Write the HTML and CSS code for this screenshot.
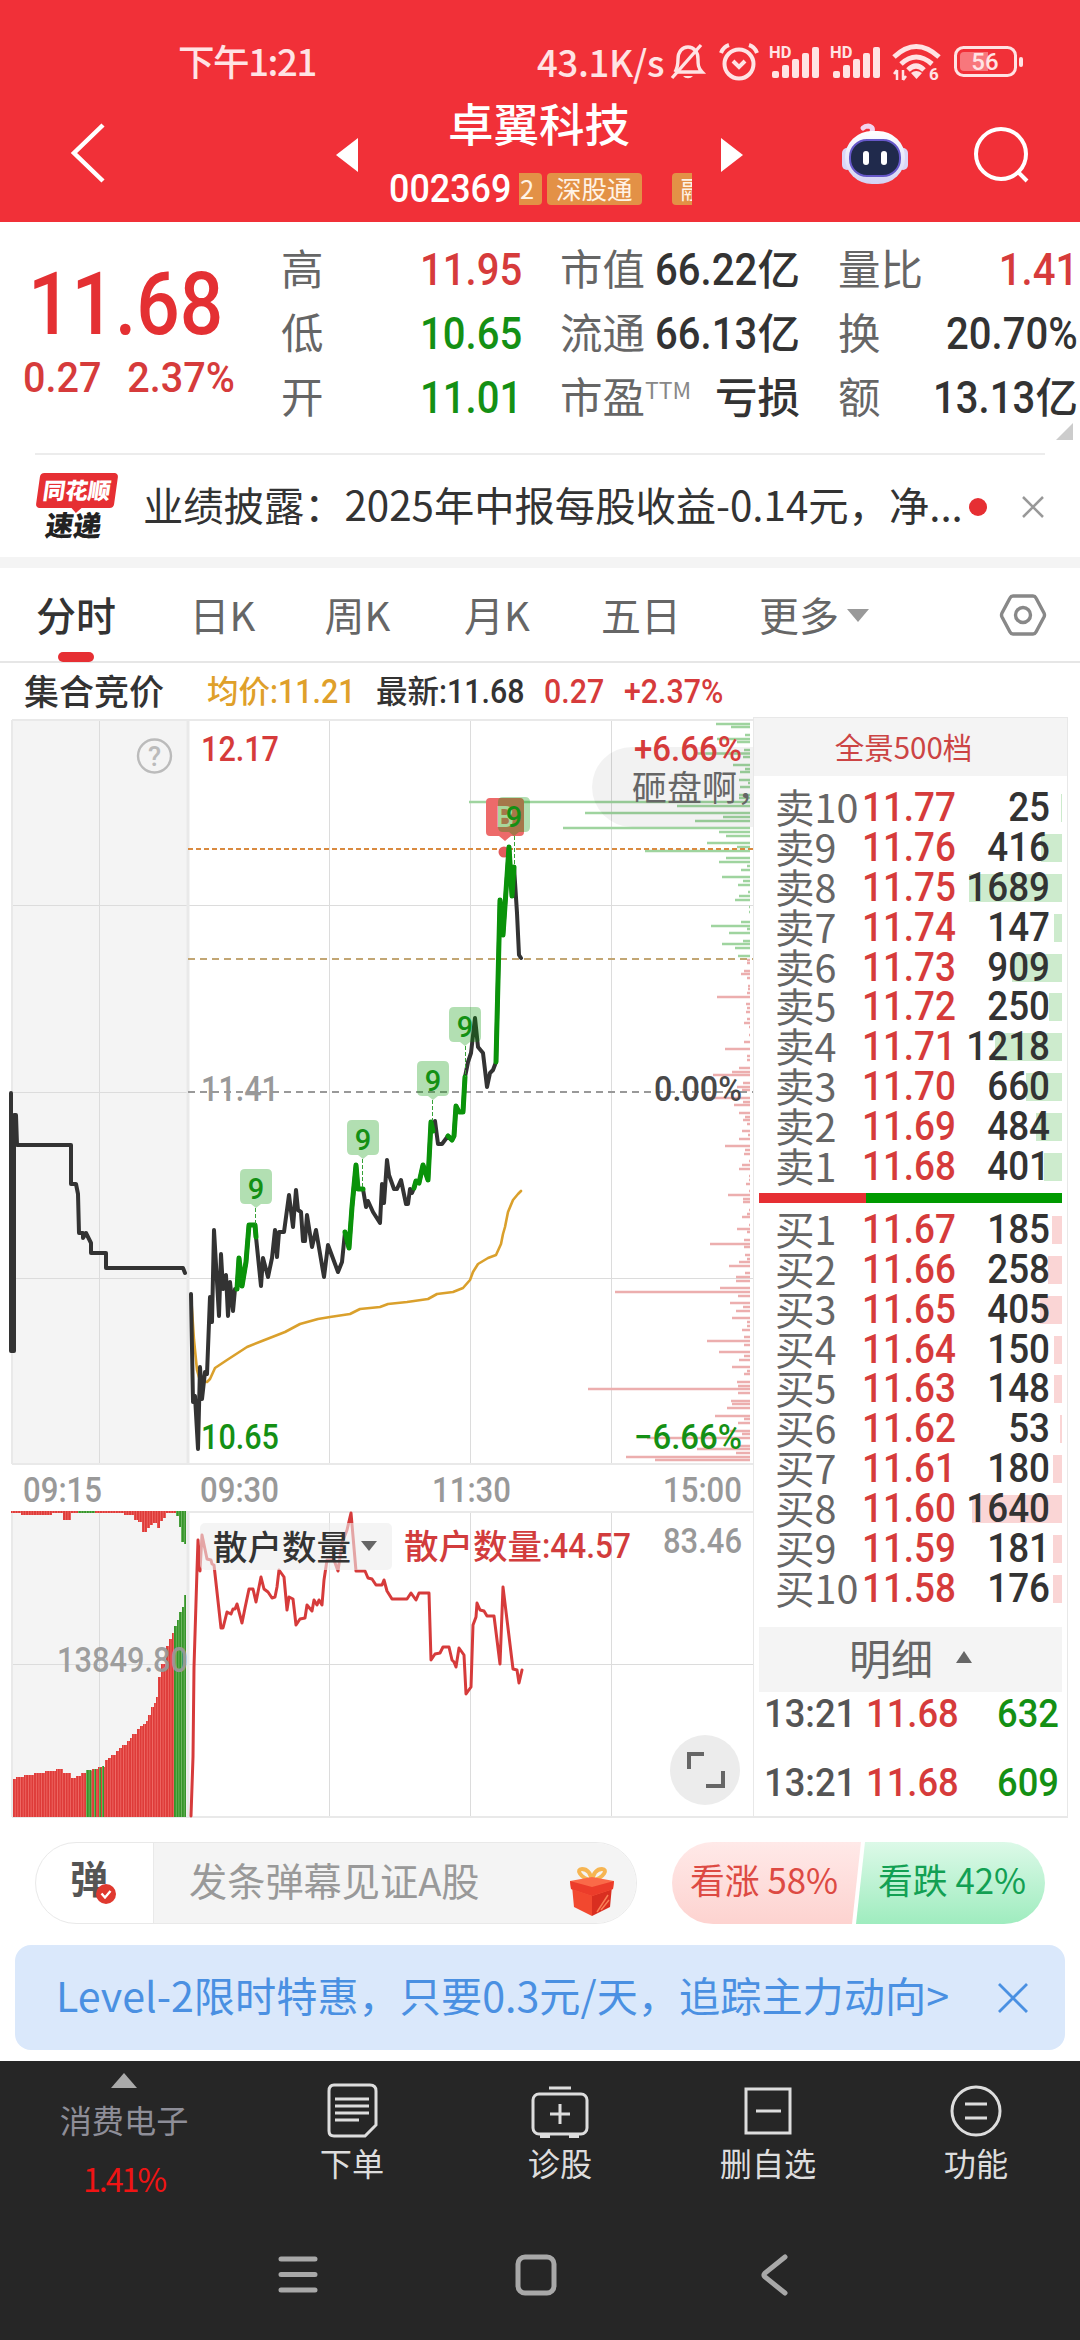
FILE: index.html
```html
<!DOCTYPE html>
<html lang="zh-CN">
<head>
    <meta charset="UTF-8">
    <meta name="viewport" content="width=device-width, initial-scale=1.0">
    <title>卓翼科技 002369</title>
    <link rel="stylesheet" href="styles.css">
</head>
<body>

    <header class="header">
        <div class="status-bar">
            <span class="clock">下午1:21</span>
            <div class="status-icons">
                <span class="speed">43.1K/s</span>
                <svg class="bell" width="36" height="38" viewBox="0 0 36 38" fill="none" stroke="#ffe3e4" stroke-width="3.400">
                    <path d="M7 29H32C28 25 28 21 28 16C28 9 24 4 18 4C12 4 8 9 8 16C8 21 8 24 5 29"/>
                    <path d="M2 35L31 2"/>
                    <path d="M13 33A6 5 0 0 0 23 33Z" fill="#ffe3e4" stroke="none"/>
                </svg>
                <svg class="alarm" width="40" height="38" viewBox="0 0 40 38" fill="none" stroke="#ffe3e4" stroke-width="4">
                    <circle cx="20" cy="21" r="14.5"/>
                    <path d="M2 10Q4 4 10 2M38 10Q36 4 30 2M14 18L20 24L26 18"/>
                </svg>
                <svg class="signal" width="51" height="36" viewBox="0 0 51 36">
                    <text class="hd" x="0" y="14">HD</text>
                    <g fill="#ffe3e4"><rect x="3" y="27" width="7" height="7" rx="2"/><rect x="13" y="21" width="7" height="13" rx="2"/><rect x="23" y="15" width="7" height="19" rx="2"/><rect x="33" y="9" width="7" height="25" rx="2"/><rect x="43" y="3" width="7" height="31" rx="2"/></g>
                </svg>
                <svg class="signal" width="51" height="36" viewBox="0 0 51 36">
                    <text class="hd" x="0" y="14">HD</text>
                    <g fill="#ffe3e4"><rect x="3" y="27" width="7" height="7" rx="2"/><rect x="13" y="21" width="7" height="13" rx="2"/><rect x="23" y="15" width="7" height="19" rx="2"/><rect x="33" y="9" width="7" height="25" rx="2"/><rect x="43" y="3" width="7" height="31" rx="2"/></g>
                </svg>
                <svg class="wifi" width="48" height="38" viewBox="0 0 48 38" fill="none" stroke="#ffe3e4" stroke-width="5">
                    <path d="M1 14Q23 -7 46 14M8 21Q23 7 39 21M15 27Q23 19 31 27"/>
                    <path d="M18 30L23.500 36L29 30Q23 26 18 30Z" fill="#ffe3e4" stroke="none"/>
                    <path d="M4 27V37M4 27L1 31M10 27V37M10 37L13 33" stroke-width="2.500"/>
                    <text class="wifi-gen" x="36" y="37">6</text>
                </svg>
                <svg class="battery" width="70" height="32" viewBox="0 0 70 32">
                    <rect x="1.500" y="1.500" width="60" height="28" rx="8" fill="none" stroke="#ffe3e4" stroke-width="3"/>
                    <path d="M10 6H34V25H10Q6 25 6 21V10Q6 6 10 6Z" fill="#f8777c"/>
                    <rect x="65" y="11" width="4" height="10" rx="2" fill="#ffe3e4"/>
                    <text class="battery-text" x="31" y="23.500" text-anchor="middle">56</text>
                </svg>
            </div>
        </div>
        <div class="title-bar">
            <svg class="back" width="36" height="60" viewBox="0 0 36 60" fill="none" stroke="#fff" stroke-width="4.500"><path d="M33 2L4 30L33 58"/></svg>
            <svg class="prev" width="22" height="34" viewBox="0 0 22 34"><path d="M22 0V34L0 17Z" fill="#fff"/></svg>
            <div class="stock">
                <h1>卓翼科技</h1>
                <div class="stock-code">
                    <span class="code">002369</span>
                    <span class="tag tag-cut-left">2</span>
                    <span class="tag">深股通</span>
                    <span class="tag tag-cut-right">融</span>
                </div>
            </div>
            <svg class="next" width="22" height="34" viewBox="0 0 22 34"><path d="M0 0V34L22 17Z" fill="#fff"/></svg>
            <svg class="robot" width="68" height="64" viewBox="0 0 68 64">
                <defs>
                    <linearGradient id="shell" x1="0" y1="0" x2="0" y2="1"><stop offset="0" stop-color="#fff"/><stop offset="1" stop-color="#d3d2f5"/></linearGradient>
                </defs>
                <path d="M30 12Q34 5 27 4Q24 4 22 6" fill="none" stroke="#f3d3ee" stroke-width="5" stroke-linecap="round"/>
                <rect x="1" y="26" width="10" height="22" rx="5" fill="#d9d6f7"/>
                <rect x="57" y="26" width="10" height="22" rx="5" fill="#d9d6f7"/>
                <rect x="4" y="9" width="60" height="53" rx="27" fill="url(#shell)"/>
                <rect x="9" y="18" width="50" height="36" rx="17" fill="#202a4c" stroke="#6658c9" stroke-width="2"/>
                <rect x="22" y="29" width="6" height="14" rx="3" fill="#fff"/>
                <rect x="40" y="29" width="6" height="14" rx="3" fill="#fff"/>
            </svg>
            <svg class="search" width="58" height="58" viewBox="0 0 58 58" fill="none" stroke="#fff" stroke-width="4"><circle cx="28" cy="29" r="25"/><path d="M44 46L54 56"/></svg>
        </div>
    </header>

    <section class="quote">
        <div class="price">
            <div class="last">11.68</div>
            <div class="change"><span>0.27</span><span>2.37%</span></div>
        </div>
        <dl class="metrics">
            <div><dt>高</dt><dd class="up"><span>11.95</span></dd></div>
            <div><dt>低</dt><dd class="down"><span>10.65</span></dd></div>
            <div><dt>开</dt><dd class="down"><span>11.01</span></dd></div>
        </dl>
        <dl class="metrics">
            <div><dt>市值</dt><dd><span>66.22</span><b>亿</b></dd></div>
            <div><dt>流通</dt><dd><span>66.13</span><b>亿</b></dd></div>
            <div><dt>市盈<sup>TTM</sup></dt><dd><b>亏损</b></dd></div>
        </dl>
        <dl class="metrics">
            <div><dt>量比</dt><dd class="up"><span>1.41</span></dd></div>
            <div><dt>换</dt><dd><span>20.70%</span></dd></div>
            <div><dt>额</dt><dd><span>13.13</span><b>亿</b></dd></div>
        </dl>
        <span class="corner"></span>
    </section>

    <section class="news">
        <div class="news-logo">
            <span class="logo-top">同花顺</span>
            <span class="logo-bottom">速递</span>
        </div>
        <p>业绩披露：2025年中报每股收益-0.14元，净...</p>
        <span class="dot"></span>
        <svg width="24" height="24" viewBox="0 0 24 24" fill="none" stroke="#999" stroke-width="2.500"><path d="M2 2L22 22M22 2L2 22"/></svg>
    </section>

    <nav class="tabs">
        <a class="tab active">分时</a>
        <a class="tab">日K</a>
        <a class="tab">周K</a>
        <a class="tab">月K</a>
        <a class="tab">五日</a>
        <a class="tab more">更多<i></i></a>
        <svg class="settings" width="46" height="42" viewBox="0 0 46 42" fill="none" stroke="#888" stroke-width="3.400"><path d="M13 2H33Q35 2 36 4L44 19Q45 21 44 23L36 38Q35 40 33 40H13Q11 40 10 38L2 23Q1 21 2 19L10 4Q11 2 13 2Z"/><circle cx="23" cy="21" r="7.500"/></svg>
    </nav>

    <div class="info-row">
        <span class="auction">集合竞价</span>
        <span class="avg">均价<i>:11.21</i></span>
        <span class="latest">最新<i>:11.68</i></span>
        <span class="up diff"><i>0.27</i></span>
        <span class="up pct"><i>+2.37%</i></span>
    </div>

    <main class="board">
        <svg class="chart" width="753" height="1101" viewBox="0 717 753 1101">
            <defs>
                <pattern id="stripeRed" x="13" width="2.640" height="10" patternUnits="userSpaceOnUse"><rect width="2.640" height="10" fill="#f47a76"/><rect width="2" height="10" fill="#de3b39"/></pattern>
                <pattern id="stripeGreen" x="13" width="2.640" height="10" patternUnits="userSpaceOnUse"><rect width="2.640" height="10" fill="#84c477"/><rect width="2" height="10" fill="#36942a"/></pattern>
                <symbol id="nine" viewBox="0 0 32 39">
                    <path d="M5 0H27Q32 0 32 5V30Q32 35 27 35H21L16 39L11 35H5Q0 35 0 30V5Q0 0 5 0Z" fill="#009600" fill-opacity=".3"/>
                    <text x="16" y="30" class="nine" text-anchor="middle">9</text>
                </symbol>
            </defs>

            <!-- grid -->
            <rect x="12" y="720" width="176" height="744" fill="#f4f4f4"/>
            <rect x="12" y="1512" width="176" height="305" fill="#f4f4f4"/>
            <g fill="none" stroke="#dcdcdc">
                <path d="M12 905.500H753M12 1092.500H188M12 1278.500H753M99.500 720V1464M329.500 720V1464M470.500 720V1464M611.500 720V1464"/>
                <path d="M12 1664.500H753M99.500 1512V1817M329.500 1512V1817M470.500 1512V1817M611.500 1512V1817"/>
            </g>
            <g fill="none" stroke="#e9e9e9" stroke-width="2">
                <path d="M12 720H753M12 1464H753M12 1512H753M12 1817H753M12 720V1464M12 1512V1817"/>
                <path d="M188 720V1464M188 1512V1817" stroke-width="3"/>
            </g>

            <!-- order depth -->
            <g fill="none" stroke-width="2.600">
                <path stroke="#9fd49f" d="M716 724H750M731 727H750M745 735H750M717 739H750M737 742H750M744 750H750M695 753.500H750M743 757H750M733 765H750M745 769H750M740 772H750M739 780H750M748 783H750M740 787H750M739 795H750M739 798H750M469 802H750M677 806H750M585 813H750M723 817H750M695 821H750M563 828H750M719 832H750M726 836H750M707 843H750M737 847H750M645 851H750M726 858H750M719 862H750M747 866H750M741 870H750M722 877H750M743 881H750M738 885H750M748 892H750M739 896H750M735 900H750M749 907H750M749 912H750M741 922H750M711 926H750M747 929H750M729 933H750M743 941H750M722 944H750M735 948H750M738 956H750"/>
                <path stroke="#ecaeae" d="M747 960H750M747 963H750M744 971H750M741 974H750M747 978H750M748 986H750M748 989H750M747 993H750M717 997H750M746 1004H750M747 1008H750M746 1012H750M747 1019H750M744 1023H750M749 1027H750M749 1035H750M744 1042H750M725 1049H750M747 1056H750M747 1060H750M739 1068H750M732 1072H750M713 1075H750M743 1083H750M737 1087H750M742 1090H750M707 1098H750M743 1102H750M734 1105H750M739 1113H750M745 1117H750M743 1120H750M747 1124H750M742 1131H750M748 1135H750M739 1139H750M725 1146H750M745 1150H750M744 1154H750M749 1161H750M742 1165H750M739 1169H750M749 1176H750M749 1180H750M746 1184H750M749 1191H750M728 1195H750M743 1199H750M743 1202H750M749 1210H750M747 1214H750M742 1217H750M749 1225H750M737 1229H750M747 1232H750M744 1240H750M710 1244H750M744 1247H750M745 1255H750M747 1259H750M739 1262H750M729 1266H750M745 1273H750M736 1277H750M736 1281H750M720 1288H750M615 1292H750M738 1296H750M730 1303H750M743 1307H750M736 1311H750M732 1318H750M747 1322H750M747 1326H750M742 1330H750M744 1337H750M707 1341H750M744 1345H750M719 1352H750M744 1356H750M739 1360H750M732 1367H750M747 1371H750M744 1374H750M737 1382H750M738 1386H750M588 1389H750M738 1393H750M731 1401H750M732 1404H750M727 1408H750M715 1416H750M744 1419H750M738 1423H750M730 1431H750M742 1434H750M647 1438H750M740 1446H750M697 1449H750M736 1453H750M626 1457H750M655 1460H750"/>
            </g>

            <!-- danmaku bubble -->
            <path d="M753 747H632A40 40 0 0 0 632 827H753Z" fill="#000" fill-opacity=".05"/>
            <text class="cjk" x="632" y="801" font-size="35" fill="#666">砸盘啊，</text>

            <g fill="none" stroke-width="2">
                <path d="M188 849H753" stroke="#d98a40" stroke-dasharray="5 3"/>
                <path d="M188 959H753" stroke="#c2a674" stroke-dasharray="7 5"/>
                <path d="M188 1092H753" stroke="#999" stroke-dasharray="7 5"/>
            </g>

            <!-- call auction -->
            <path class="line" d="M11 1093V1351H14V1115H16L17 1145H71V1184H76L78 1194L79 1233H83V1238L86 1233L91 1243V1253H106V1268H183L185 1273"/>

            <!-- average price -->
            <path class="line avg-line" d="M191 1295L194 1340L197 1370L200 1381L207 1382L210 1379L215 1368L227 1360L247 1347L262 1341L285 1332L300 1324L318 1319L330 1317L350 1314L360 1309L380 1307L388 1304L407 1302L428 1299L437 1294L453 1292L463 1288L470 1280L473 1272L478 1264L488 1258L496 1255L501 1244L503 1234L505 1227L508 1212L513 1200L518 1194L521 1191"/>

            <circle cx="504" cy="852" r="5.500" fill="#e35b5b"/>

            <!-- price -->
            <path class="line" d="M191 1294L193 1402L195 1396L198 1449L200 1367L202 1399L205 1372L207 1374L210 1297L212 1322L214 1230L219 1316L221 1254L223 1289L226 1275L228 1316L230 1282L233 1311L235 1289H237L239 1258L242 1286L246 1262L249 1225H255L256 1237L261 1286L263 1258L268 1277L272 1258L275 1230L277 1257L279 1232H284L289 1195L293 1227L296 1190L298 1210L301 1212L303 1241H305L307 1215L312 1247L316 1230L324 1277L328 1245L338 1272L342 1262L345 1232L349 1248L352 1207L356 1165L358 1189H363L366 1207L368 1201L373 1212L380 1223L382 1184L384 1203L387 1160L389 1175L394 1189H397L401 1180L406 1204H408L410 1189L412 1193L414 1188L416 1181L419 1183L423 1165L428 1180L431 1122L433 1131L435 1121L438 1144H442L448 1136L452 1140L454 1136L456 1106L459 1112H463L465 1077L468 1062L471 1053L475 1018L478 1047L483 1053L487 1087L490 1073L493 1070L496 1062L500 900L503 935L509 847L512 896L514 867L517 913L519 955L521 958"/>
            <path class="line green" d="M237 1289L239 1258L242 1286L246 1262L249 1225H255L256 1237M345 1232L349 1248L352 1207L356 1165L358 1189H363M414 1188L416 1181L419 1183L423 1165L428 1180L431 1122L433 1131M448 1136L452 1140L454 1136L456 1106L459 1112H463L465 1077M496 1062L500 900L503 935L509 847L512 896L514 867"/>

            <!-- signal marks -->
            <path d="M255.500 1208V1224M362.500 1159V1188M432.500 1100V1121M465.500 1046V1077M514.500 836V866" stroke="#36a136" stroke-dasharray="4 2"/>
            <path d="M490 798H520Q524 798 524 802V832Q524 836 520 836H511L505 841L499 836H490Q486 836 486 832V802Q486 798 490 798Z" fill="#ed6a6a"/>
            <text x="505" y="827" class="mark-b" text-anchor="middle">B</text>
            <use href="#nine" x="240" y="1169" width="32" height="39"/>
            <use href="#nine" x="347" y="1120" width="32" height="39"/>
            <use href="#nine" x="417" y="1061" width="32" height="39"/>
            <use href="#nine" x="449" y="1007" width="32" height="39"/>
            <use href="#nine" x="498" y="797" width="32" height="39"/>

            <circle cx="154.500" cy="756" r="16.500" fill="none" stroke="#bbb" stroke-width="2.400"/>
            <text class="num" x="154.500" y="766" font-size="27" fill="#bbb" text-anchor="middle">?</text>

            <g class="num" font-size="35">
                <text x="201" y="761" textLength="78" lengthAdjust="spacingAndGlyphs" fill="#d63b3b">12.17</text>
                <text x="201" y="1101" textLength="78" lengthAdjust="spacingAndGlyphs" fill="#999">11.41</text>
                <text x="201" y="1449" textLength="78" lengthAdjust="spacingAndGlyphs" fill="#149014">10.65</text>
                <text x="634" y="761" textLength="108" lengthAdjust="spacingAndGlyphs" fill="#d63b3b">+6.66%</text>
                <text x="654" y="1101" textLength="88" lengthAdjust="spacingAndGlyphs" fill="#484848">0.00%</text>
                <text x="634" y="1449" textLength="108" lengthAdjust="spacingAndGlyphs" fill="#149014">−6.66%</text>
                <g fill="#999">
                    <text x="23" y="1502" textLength="79" lengthAdjust="spacingAndGlyphs">09:15</text>
                    <text x="200" y="1502" textLength="79" lengthAdjust="spacingAndGlyphs">09:30</text>
                    <text x="432" y="1502" textLength="79" lengthAdjust="spacingAndGlyphs">11:30</text>
                    <text x="663" y="1502" textLength="79" lengthAdjust="spacingAndGlyphs">15:00</text>
                </g>
            </g>

            <!-- auction volume -->
            <path fill="url(#stripeRed)" d="M13 1817V1779H16V1777H24V1775H34V1773H45V1771H56V1769H63V1773H71V1778H76V1776H81V1773H86V1771H92V1769H98V1767H105V1760H108V1758H111V1755H116V1751H119V1748H122V1745H127V1741H130V1738H132V1734H137V1729H140V1726H143V1724H146V1721H148V1715H151V1707H154V1703H156V1697H158V1677H161V1664H166V1646H169V1639H172V1633H174V1817Z"/>
            <path fill="url(#stripeGreen)" d="M174 1817V1626H177V1620H179V1612H182V1607H184V1595H186V1817ZM86 1817V1770H91.500V1817ZM94 1817V1769H96V1817ZM99 1817V1768H101V1817ZM102 1817V1766H104V1817Z"/>
            <path fill="url(#stripeRed)" d="M11 1511H176V1513H166V1518H163V1521H160V1528H157V1523H153V1525H150V1528H147V1532H142V1522H138V1520H134V1515H124V1513H71V1520H63V1513H52V1515H21V1513H11Z"/>
            <path fill="url(#stripeGreen)" d="M176 1511H186V1544H184V1542H181V1527H179V1516H176ZM78 1511H95V1513H78Z"/>
            <text class="num" x="57" y="1672" font-size="35" textLength="131" lengthAdjust="spacingAndGlyphs" fill="#999" fill-opacity=".95">13849.80</text>

            <!-- retail holder count -->
            <path class="line red" d="M191 1816L193 1757L194 1667L197 1570L198 1540L200 1571L202 1535L207 1559L211 1560L212 1564L214 1565L221 1628H223L227 1612L231 1614L233 1609H235L237 1604L242 1623L245 1608L249 1589H253L256 1602L261 1577L264 1589L268 1592L272 1598L275 1597L277 1587L279 1570L284 1577L287 1610L289 1597L293 1599L296 1625L300 1619L305 1618L307 1605L312 1611L314 1600L317 1605L319 1600L322 1605L324 1580L327 1560H334L338 1571L342 1543L347 1530L351 1513L356 1571H365L368 1578L372 1579L376 1585H382L384 1580L387 1591L392 1599H407L411 1593L416 1600L419 1593H429L431 1660L435 1654L440 1653L443 1647H449L452 1660L454 1662L456 1667L459 1648L464 1655L466 1694L471 1687L473 1625L476 1617L477 1603L480 1610L484 1611L487 1616H494L500 1664L503 1587L513 1669L517 1670L519 1683L522 1670"/>
            <rect x="200" y="1523" width="192" height="47" rx="5" fill="#ededed" fill-opacity=".6"/>
            <text class="cjk" x="213" y="1560" font-size="34.500" font-weight="500" fill="#333">散户数量</text>
            <path d="M361 1541H377L369 1551Z" fill="#666"/>
            <text class="cjk" x="404" y="1559" font-size="34.500" font-weight="500" fill="#d23c3c">散户数量</text>
            <text class="num" x="542" y="1558" font-size="35" textLength="89" lengthAdjust="spacingAndGlyphs" fill="#d23c3c">:44.57</text>
            <text class="num" x="663" y="1553" font-size="35" textLength="79" lengthAdjust="spacingAndGlyphs" fill="#999">83.46</text>

            <circle cx="705" cy="1770" r="35" fill="#ececec"/>
            <path d="M689 1769V1754H704M723 1771V1786H706" fill="none" stroke="#666" stroke-width="4"/>
        </svg>

        <aside class="book">
            <div class="book-head">全景500档</div>
            <ul class="levels sell">
                <li><span>卖10</span><em>11.77</em><strong>25</strong><i style="width:1px"></i></li>
                <li><span>卖9</span><em>11.76</em><strong>416</strong><i style="width:21px"></i></li>
                <li><span>卖8</span><em>11.75</em><strong>1689</strong><i style="width:93px"></i></li>
                <li><span>卖7</span><em>11.74</em><strong>147</strong><i style="width:8px"></i></li>
                <li><span>卖6</span><em>11.73</em><strong>909</strong><i style="width:50px"></i></li>
                <li><span>卖5</span><em>11.72</em><strong>250</strong><i style="width:13px"></i></li>
                <li><span>卖4</span><em>11.71</em><strong>1218</strong><i style="width:67px"></i></li>
                <li><span>卖3</span><em>11.70</em><strong>660</strong><i style="width:36px"></i></li>
                <li><span>卖2</span><em>11.69</em><strong>484</strong><i style="width:26px"></i></li>
                <li><span>卖1</span><em>11.68</em><strong>401</strong><i style="width:18px"></i></li>
            </ul>
            <div class="ratio"><span></span></div>
            <ul class="levels buy">
                <li><span>买1</span><em>11.67</em><strong>185</strong><i style="width:10px"></i></li>
                <li><span>买2</span><em>11.66</em><strong>258</strong><i style="width:14px"></i></li>
                <li><span>买3</span><em>11.65</em><strong>405</strong><i style="width:22px"></i></li>
                <li><span>买4</span><em>11.64</em><strong>150</strong><i style="width:8px"></i></li>
                <li><span>买5</span><em>11.63</em><strong>148</strong><i style="width:8px"></i></li>
                <li><span>买6</span><em>11.62</em><strong>53</strong><i style="width:2px"></i></li>
                <li><span>买7</span><em>11.61</em><strong>180</strong><i style="width:9px"></i></li>
                <li><span>买8</span><em>11.60</em><strong>1640</strong><i style="width:90px"></i></li>
                <li><span>买9</span><em>11.59</em><strong>181</strong><i style="width:9px"></i></li>
                <li><span>买10</span><em>11.58</em><strong>176</strong><i style="width:9px"></i></li>
            </ul>
            <div class="detail-head">明细<i></i></div>
            <div class="deal"><span>13:21</span><em>11.68</em><strong>632</strong></div>
            <div class="deal"><span>13:21</span><em>11.68</em><strong>609</strong></div>
        </aside>
    </main>

    <section class="interact">
        <div class="danmu">
            <div class="danmu-switch">
                <b>弹</b>
                <svg width="20" height="20" viewBox="0 0 20 20"><circle cx="10" cy="10" r="10" fill="#e0392f"/><path d="M5.500 9.500L9 13.500L14.500 7" fill="none" stroke="#fff" stroke-width="2.400"/></svg>
            </div>
            <div class="danmu-input">
                <span>发条弹幕见证A股</span>
                <svg width="46" height="50" viewBox="0 0 46 50">
                    <path d="M23 14C10 10 7 2 13 2C19 2 22 8 23 14C24 8 27 2 33 2C39 2 36 10 23 14Z" fill="none" stroke="#f6b552" stroke-width="4"/>
                    <path d="M3 19L23 27V49L5 40Z" fill="#f2482f"/>
                    <path d="M43 19L23 27V49L41 40Z" fill="#d92e20"/>
                    <path d="M1 14L23 10L45 14L44 22L23 29L2 22Z" fill="#fa6a48"/>
                    <path d="M1 14L23 20L45 14L44 22L23 29L2 22Z" fill="#ec3c2a"/>
                    <path d="M28 45L39 28M32 43L40 33" stroke="#f97e55" stroke-width="1.500"/>
                </svg>
            </div>
        </div>
        <div class="vote">
            <div class="vote-up">看涨 58%</div>
            <div class="vote-down">看跌 42%</div>
        </div>
    </section>

    <div class="banner">
        <span>Level-2限时特惠，只要0.3元/天，追踪主力动向&gt;</span>
        <svg width="30" height="30" viewBox="0 0 30 30" fill="none" stroke="#4a90e2" stroke-width="2.800"><path d="M1 1L29 29M29 1L1 29"/></svg>
    </div>

    <footer class="footer">
        <div class="actions">
            <div class="industry">
                <i></i>
                <span>消费电子</span>
                <b>1.41%</b>
            </div>
            <div class="action">
                <svg width="60" height="56" viewBox="0 0 60 56" fill="none" stroke="#ddd" stroke-width="3"><path d="M12 2H48Q54 2 54 8V42L43 53H12Q7 53 7 48V8Q7 2 12 2Z"/><path d="M13 16H47M13 23H47M13 30H47M13 37H37"/></svg>
                <span>下单</span>
            </div>
            <div class="action">
                <svg width="60" height="56" viewBox="0 0 60 56" fill="none" stroke="#ddd" stroke-width="3"><rect x="3" y="11" width="54" height="40" rx="6"/><path d="M19 5H41M30 21V41M20 31H40M10 53.500H20M39 53.500H49"/></svg>
                <span>诊股</span>
            </div>
            <div class="action">
                <svg width="60" height="56" viewBox="0 0 60 56" fill="none" stroke="#ddd" stroke-width="3"><rect x="8" y="6" width="44" height="44"/><path d="M18 28H43"/></svg>
                <span>删自选</span>
            </div>
            <div class="action">
                <svg width="60" height="56" viewBox="0 0 60 56" fill="none" stroke="#ddd" stroke-width="3"><circle cx="30" cy="28" r="24"/><path d="M19 21H41M19 35H41"/></svg>
                <span>功能</span>
            </div>
        </div>
        <div class="system-nav">
            <svg width="42" height="42" viewBox="0 0 42 42" stroke="#a8a8a8" stroke-width="5" stroke-linecap="round"><path d="M4 5H38M4 20.500H38M4 36H38"/></svg>
            <svg width="42" height="42" viewBox="0 0 42 42" fill="none" stroke="#a8a8a8" stroke-width="5"><rect x="3" y="3" width="36" height="36" rx="7"/></svg>
            <svg width="42" height="42" viewBox="0 0 42 42" fill="none" stroke="#a8a8a8" stroke-width="5" stroke-linecap="round"><path d="M33 3L13 19Q11 21 13 23L33 39"/></svg>
        </div>
    </footer>

</body>
</html>
```
FILE: styles.css
```css
* {
    margin: 0;
    padding: 0;
    box-sizing: border-box;
}

body {
    width: 1080px;
    height: 2340px;
    overflow: hidden;
    background: #fff;
    color: #333;
    font-family: "Noto Sans CJK SC", sans-serif;
    display: flex;
    flex-direction: column;
}

svg {
    display: block;
    flex: none;
    overflow: visible;
}

.chart {
    overflow: hidden;
}

i, em {
    font-style: normal;
}

ul {
    list-style: none;
}

.up {
    color: #d63b3b;
}

.down {
    color: #149014;
}

/* header */
.header {
    height: 222px;
    background: #f13038;
    color: #fff;
}

.status-bar {
    height: 96px;
    padding: 28px 56px 0 178px;
    display: flex;
    justify-content: space-between;
    color: #ffe3e4;
}

.clock, .speed {
    font-size: 36.5px;
    line-height: 66px;
    font-weight: 500;
    letter-spacing: -1.4px;
}

.status-icons {
    display: flex;
    align-items: center;
}

.speed {
    width: 133px;
    letter-spacing: -0.3px;
}

.alarm {
    margin-left: 13px;
}

.signal {
    margin-left: 10px;
}

.hd {
    font: 700 16.5px Roboto, sans-serif;
    fill: #ffe3e4;
}

.wifi {
    margin-left: 12px;
}

.wifi-gen {
    font: 700 17px Roboto, sans-serif;
    fill: #ffe3e4;
    stroke: none;
}

.battery {
    margin-left: 13px;
}

.battery-text {
    font: 500 24px Roboto, sans-serif;
    fill: #ffe3e4;
}

.title-bar {
    height: 126px;
    display: grid;
    grid-template-columns: 70px 266px 22px 363px 120px 130px 109px;
}

.back {
    grid-column: 2;
    margin-top: 27px;
}

.prev, .next {
    margin-top: 42px;
}

.stock {
    padding-left: 31px;
}

.stock h1 {
    margin-top: -4px;
    font-size: 45.5px;
    line-height: 60px;
    font-weight: 500;
    padding-left: 59px;
}

.stock-code {
    display: flex;
    align-items: center;
    height: 40px;
    margin-top: 17px;
}

.code {
    width: 130px;
    font: 500 39px/42px Roboto, sans-serif;
    transform: scaleX(0.92);
    transform-origin: left;
}

.tag {
    height: 32px;
    margin-right: 5px;
    padding: 0 9px;
    border-radius: 4px;
    background: #e39146;
    font-size: 25.5px;
    line-height: 30px;
    color: #fff3e6;
}

.tag-cut-left {
    width: 23px;
    padding: 0 0 0 1px;
    border-radius: 0 4px 4px 0;
}

.tag-cut-right {
    width: 20px;
    margin-left: 25px;
    padding: 0 0 0 9px;
    border-radius: 4px 0 0 4px;
    overflow: hidden;
}

.robot {
    margin-top: 26px;
}

.search {
    margin-top: 29px;
    margin-left: 2px;
}

/* quote */
.quote {
    position: relative;
    height: 231px;
    padding-top: 14px;
    display: grid;
    grid-template-columns: 281px 241px 38px 240px 38px 240px;
}

.quote > dl:nth-of-type(2) {
    grid-column: 4;
}

.quote > dl:nth-of-type(3) {
    grid-column: 6;
}

.last {
    margin: 24px 0 0 28px;
    font: 500 87px/88px Roboto, sans-serif;
    transform: scaleX(0.88);
    transform-origin: left;
    color: #e43033;
}

.change {
    display: flex;
    gap: 28px;
    margin: -1px 0 0 23px;
    font: 500 43px/60px Roboto, sans-serif;
    transform: scaleX(0.92);
    transform-origin: left;
    color: #d63b3b;
}

.metrics > div {
    height: 64px;
    display: flex;
    justify-content: space-between;
    white-space: nowrap;
}

.metrics dt {
    font-size: 42.5px;
    line-height: 61px;
    color: #666;
}

.metrics sup {
    font-size: 23px;
    line-height: 0;
    vertical-align: 14px;
    color: #888;
}

.metrics dd {
    display: flex;
}

.metrics dd span {
    font: 500 44px/69px Roboto, sans-serif;
    transform: scaleX(0.91);
    transform-origin: right;
}

.metrics b {
    font-size: 42.5px;
    line-height: 61px;
    font-weight: 500;
}

.corner {
    position: absolute;
    right: 7px;
    bottom: 13px;
    border-left: 17px solid transparent;
    border-bottom: 17px solid #ccc;
}

/* news */
.news {
    height: 116px;
    margin: 0 35px;
    border-top: 2px solid #ececec;
    display: flex;
    align-items: center;
}

.news-logo {
    width: 108px;
    height: 70px;
    margin-top: -9px;
    font-weight: 900;
}

.logo-top, .logo-bottom {
    display: block;
    position: relative;
    text-align: center;
    transform: skewX(-8deg);
}

.logo-top {
    width: 78px;
    height: 35px;
    margin-left: 3px;
    border-radius: 4px;
    background: #e62f33;
    color: #fff;
    font-size: 22.5px;
    line-height: 33px;
}

.logo-top::after {
    content: "";
    position: absolute;
    left: 36px;
    top: 35px;
    border: 5px solid transparent;
    border-top-color: #e62f33;
    border-bottom: 0;
}

.logo-bottom {
    width: 78px;
    font-size: 28px;
    line-height: 32px;
    color: #222;
}

.news p {
    width: 826px;
    font-size: 40.3px;
    white-space: nowrap;
    line-height: 60px;
    margin-top: -17px;
}

.dot {
    flex: none;
    width: 18px;
    height: 18px;
    margin-right: 34px;
    margin-top: -11px;
    border-radius: 50%;
    background: #e62f33;
}

.news svg {
    margin-top: -11px;
}

/* tabs */
.tabs {
    height: 106px;
    border-top: 11px solid #f4f4f4;
    border-bottom: 2px solid #e6e6e6;
    margin-top: -12px;
    display: grid;
    grid-template-columns: 152px 141px 129px 150px 138px 208px 82px 80px;
    align-items: center;
}

.tab {
    font-size: 40px;
    line-height: 93px;
    text-align: center;
    color: #666;
}

.tab.active {
    position: relative;
    color: #333;
    font-weight: 500;
}

.tab.active::after {
    content: "";
    position: absolute;
    left: 58px;
    bottom: -1px;
    width: 36px;
    height: 10px;
    border-radius: 5px;
    background: #e62f33;
}

.more i {
    display: inline-block;
    margin-left: 8px;
    vertical-align: 9px;
    border: 11px solid transparent;
    border-top: 13px solid #999;
    border-bottom: 0;
}

.settings {
    margin-left: 82px;
}

/* info row */
.info-row {
    height: 54px;
    display: flex;
    align-items: center;
    font-size: 31.5px;
    font-weight: 500;
    white-space: nowrap;
    line-height: 54px;
}

.info-row i {
    display: inline-block;
    font-family: Roboto, sans-serif;
    font-size: 33px;
    transform: scaleX(0.92);
    transform-origin: left;
}

.auction {
    width: 207px;
    padding-left: 24px;
    font-size: 35px;
}

.avg {
    width: 169px;
    color: #dfa02a;
}

.latest {
    width: 168px;
}

.diff {
    width: 80px;
}

/* chart + order book */
.board {
    height: 1101px;
    display: flex;
}

.cjk {
    font-family: "Noto Sans CJK SC", sans-serif;
}

.num {
    font-family: Roboto, sans-serif;
    font-weight: 500;
}

.nine {
    font: 500 29px Roboto, sans-serif;
    fill: #149014;
}

.mark-b {
    font: 500 29px Roboto, sans-serif;
    fill: #f3f3dd;
}

.line {
    fill: none;
    stroke: #333;
    stroke-width: 4;
    stroke-linejoin: round;
    stroke-linecap: round;
}

.line.green {
    stroke: #0a930a;
    stroke-width: 5;
}

.line.red {
    stroke: #d63b3b;
    stroke-width: 3;
}

.line.avg-line {
    stroke: #daa02c;
    stroke-width: 2.6;
}

.book {
    width: 315px;
    border: 1px solid #e8e8e8;
    border-width: 1px 1px 2px 1px;
    font-family: Roboto, sans-serif;
}

.book-head {
    height: 58px;
    padding-right: 14px;
    background: #f4f4f4;
    color: #cc4444;
    text-align: center;
    font: 400 29.5px/57px "Noto Sans CJK SC", sans-serif;
}

.levels li {
    position: relative;
    height: 39.9px;
    padding-left: 21px;
    padding-right: 17px;
    display: grid;
    grid-template-columns: 87px 91px 1fr;
    line-height: 40px;
    font-size: 40px;
}

.levels span {
    font-family: "Noto Sans CJK SC", sans-serif;
    font-size: 39.5px;
    line-height: 36px;
    color: #666;
}

.levels em, .levels strong, .deal > * {
    font-weight: 500;
    transform: scaleX(0.92);
    transform-origin: left;
}

.levels em, .deal em {
    color: #d63b3b;
}

.levels strong, .deal strong {
    text-align: right;
    transform-origin: right;
    z-index: 1;
}

.levels i {
    position: absolute;
    right: 5px;
    top: 6px;
    height: 28px;
    background: #cdebcd;
}

.buy i {
    background: #fad5d5;
}

.sell {
    margin-top: 12px;
}

.ratio {
    height: 10px;
    margin: 6px 5px 7px;
    background: #009a00;
}

.ratio span {
    display: block;
    width: 107px;
    height: 10px;
    background: #e62f33;
}

.detail-head {
    height: 65px;
    margin: 18px 5px 0;
    padding-bottom: 4px;
    background: #f4f4f4;
    display: flex;
    justify-content: center;
    align-items: center;
    gap: 23px;
    color: #666;
    font: 400 42px/60px "Noto Sans CJK SC", sans-serif;
}

.detail-head i {
    border: 8.5px solid transparent;
    border-bottom: 12px solid #666;
    border-top: 0;
}

.deal {
    height: 69px;
    padding: 0 8px 0 10px;
    display: grid;
    grid-template-columns: 102px 101px 1fr;
    font-size: 39.5px;
    line-height: 44px;
    color: #555;
}

.deal strong {
    color: #149014;
}

/* danmu + vote */
.interact {
    height: 127px;
    padding: 24px 35px 0;
    display: flex;
    justify-content: space-between;
}

.danmu {
    width: 602px;
    height: 82px;
    border: 1px solid #e9e9e9;
    border-radius: 41px;
    overflow: hidden;
    display: flex;
}

.danmu-switch {
    width: 118px;
    padding: 9px 0 0 34px;
    position: relative;
    border-right: 1px solid #e9e9e9;
}

.danmu-switch b {
    display: block;
    font-size: 38px;
    line-height: 50px;
    font-weight: 700;
    color: #555;
}

.danmu-switch svg {
    position: absolute;
    left: 60px;
    top: 41px;
}

.danmu-input {
    flex: 1;
    padding: 0 21px 0 35px;
    background: #f4f4f4;
    display: flex;
    justify-content: space-between;
    align-items: center;
    font-size: 38.2px;
    line-height: 60px;
    color: #999;
}

.danmu-input span {
    margin-top: -6px;
}

.danmu-input svg {
    margin-top: 18px;
}

.vote {
    width: 373px;
    height: 82px;
    border-radius: 41px;
    overflow: hidden;
    display: flex;
    font-size: 34.8px;
    line-height: 75px;
}

.vote-up {
    width: 189px;
    padding-left: 18px;
    background: linear-gradient(#ffe9e8, #fdd3d0);
    clip-path: polygon(0 0, 100% 0, 180px 100%, 0 100%);
    color: #dd4a43;
}

.vote-down {
    width: 189px;
    margin-left: -5px;
    padding-left: 22px;
    background: linear-gradient(#dcf9e8, #9fecbf);
    clip-path: polygon(9px 0, 100% 0, 100% 100%, 0 100%);
    color: #12a053;
}

/* promo banner */
.banner {
    height: 105px;
    margin: 0 15px;
    padding: 0 37px 0 41px;
    border-radius: 16px;
    background: #dae8fb;
    color: #4a90e2;
    font-size: 41.2px;
    line-height: 60px;
    white-space: nowrap;
    display: flex;
    align-items: center;
    justify-content: space-between;
}

.banner span {
    margin-top: -7px;
}

/* bottom bar */
.footer {
    flex: 1;
    margin-top: 11px;
    background: #262626;
}

.actions {
    height: 150px;
    display: grid;
    grid-template-columns: 248px 208px 208px 208px 208px;
    font-size: 32.2px;
    color: #ddd;
}

.industry, .action {
    display: flex;
    flex-direction: column;
    align-items: center;
}

.industry i {
    margin-top: 12px;
    border: 13px solid transparent;
    border-bottom: 15px solid #aaa;
    border-top: 0;
}

.industry span {
    margin-top: 7px;
    line-height: 48px;
    color: #8e8e98;
}

.industry b {
    margin-top: 12px;
    line-height: 46px;
    font-weight: 400;
    letter-spacing: -2px;
    color: #f01414;
}

.action svg {
    margin-top: 22px;
}

.action span {
    line-height: 46px;
}

.system-nav {
    height: 129px;
    padding: 43px 286px 0 277px;
    display: flex;
    justify-content: space-between;
}
```
